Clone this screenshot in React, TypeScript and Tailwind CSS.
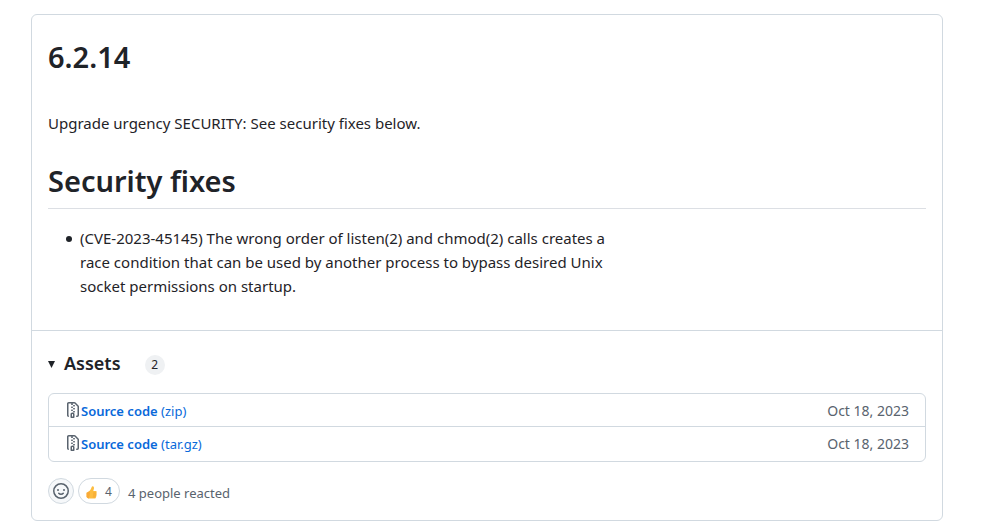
const assets = [
  { name: "Source code", ext: "(zip)", date: "Oct 18, 2023" },
  { name: "Source code", ext: "(tar.gz)", date: "Oct 18, 2023" },
];

function FileZipIcon() {
  return (
    <svg width="16" height="16" viewBox="0 0 16 16" fill="#59636e" aria-hidden="true" className="mb-0.5 shrink-0">
      <path d="M3.5 1.75v11.5c0 .09.048.173.126.217a.75.75 0 0 1-.752 1.298A1.748 1.748 0 0 1 2 13.25V1.75C2 .784 2.784 0 3.75 0h5.586c.464 0 .909.185 1.237.513l2.914 2.914c.329.328.513.773.513 1.237v8.586A1.75 1.75 0 0 1 12.25 15h-.5a.75.75 0 0 1 0-1.5h.5a.25.25 0 0 0 .25-.25V4.664a.25.25 0 0 0-.073-.177L9.513 1.573a.25.25 0 0 0-.177-.073H7.25a.75.75 0 0 1 0 1.5h-.5a.75.75 0 0 1 0-1.5h-3a.25.25 0 0 0-.25.25Zm3.75 8.75h.5c.966 0 1.75.784 1.75 1.75v3a.75.75 0 0 1-.75.75h-2.5a.75.75 0 0 1-.75-.75v-3c0-.966.784-1.75 1.75-1.75ZM6 5.25a.75.75 0 0 1 .75-.75h.5a.75.75 0 0 1 0 1.5h-.5A.75.75 0 0 1 6 5.25Zm.75 2.25h.5a.75.75 0 0 1 0 1.5h-.5a.75.75 0 0 1 0-1.5Zm1.25-.75A.75.75 0 0 1 8.75 6h.5a.75.75 0 0 1 0 1.5h-.5A.75.75 0 0 1 8 6.75ZM8.75 3h.5a.75.75 0 0 1 0 1.5h-.5a.75.75 0 0 1 0-1.5ZM8 9.75A.75.75 0 0 1 8.75 9h.5a.75.75 0 0 1 0 1.5h-.5A.75.75 0 0 1 8 9.75Zm-1 2.5v2.25h1v-2.25a.25.25 0 0 0-.25-.25h-.5a.25.25 0 0 0-.25.25Z" />
    </svg>
  );
}

function SmileyIcon() {
  return (
    <svg width="16" height="16" viewBox="0 0 16 16" fill="none" stroke="#59636e" strokeWidth="1.5" strokeLinecap="round" aria-hidden="true">
      <circle cx="8" cy="8" r="7.25" />
      <path d="M5.75 10.25C6.3 10.95 7.1 11.25 8 11.25s1.7-.3 2.25-1" />
      <circle cx="5" cy="7" r="1" fill="#59636e" stroke="none" />
      <circle cx="11" cy="7" r="1" fill="#59636e" stroke="none" />
    </svg>
  );
}

function ThumbIcon() {
  return (
    <svg width="11" height="13" viewBox="0 0 11 13" aria-hidden="true">
      <path d="M.6 6.8C2.4 6.2 3.9 4.8 4.9 3L5.7.9C6.2-.3 8.2.2 8 2.2L7.3 5h2.2c1.4 0 1.6 1.7.7 2 .9.4.8 1.7 0 2 .6.5.4 1.6-.4 1.8.3.9-.2 1.8-1.2 1.8H4C2.4 12.6 1.2 12 .6 11Z" fill="#fdbd40" />
      <path d="M.6 6.8C1.7 6.4 2.6 5.8 3.4 5L4 7.6 3 12.4C2 12.2 1.1 11.8.6 11Z" fill="#f9a936" />
      <path d="M7.2 7.1H10M7 9H10M6.9 10.9H9.6" stroke="#ee9827" strokeWidth=".6" />
    </svg>
  );
}

export default function App() {
  return (
    <main className="bg-white pt-[14px] pr-[62px] pb-[11px] pl-[31px] font-['Noto_Sans','Open_Sans',sans-serif] text-[#1f2328]">
      <article className="rounded-md border border-[#d1d9e0]">
        <div className="px-4 pt-[18px] pb-8">
          <h2 className="text-[29px] leading-12 font-semibold">6.2.14</h2>
          <p className="mt-[30px] text-[15px] leading-6">Upgrade urgency SECURITY: See security fixes below.</p>
          <h1 className="mt-[26px] border-b border-[#dcdfe4] pb-[7px] text-[29px] leading-10 font-semibold">Security fixes</h1>
          <ul className="mt-[17px] max-w-[580px] pl-[18px] text-[15px] leading-6">
            <li className="flex gap-2 before:mt-[10px] before:size-1.5 before:shrink-0 before:rounded-full before:bg-[#1f2328]">
              (CVE-2023-45145) The wrong order of listen(2) and chmod(2) calls creates a race condition that can be used by
              another process to bypass desired Unix socket permissions on startup.
            </li>
          </ul>
        </div>
        <div className="border-t border-[#d1d9e0] px-4 pt-[18px] pb-4">
          <details open>
            <summary className="flex h-7 cursor-pointer items-center">
              <svg width="7" height="7" viewBox="0 0 7 7" aria-hidden="true" className="mt-0.5">
                <path d="M0 0h7L3.5 7Z" fill="#1f2328" />
              </svg>
              <span className="ml-[9px] text-lg leading-7 font-semibold">Assets</span>
              <span className="mt-1 ml-6 flex size-5 items-center justify-center rounded-full bg-[#eff1f3] text-xs">2</span>
            </summary>
            <ul className="mt-4 divide-y divide-[#d1d9e0] rounded-md border border-[#d1d9e0] text-[13px] leading-5">
              {assets.map((asset) => (
                <li key={asset.ext} className="flex items-center justify-between px-4 pt-[7px] pb-[5px] last:pb-[7px]">
                  <a href="#" className="flex items-center text-[#0969da]">
                    <FileZipIcon />
                    <span>
                      <span className="font-semibold">{asset.name}</span> {asset.ext}
                    </span>
                  </a>
                  <time dateTime="2023-10-18" className="text-sm leading-5 text-[#59636e]">{asset.date}</time>
                </li>
              ))}
            </ul>
          </details>
          <div className="mt-4 flex items-center text-[#59636e]">
            <button type="button" aria-label="Add reaction" className="flex size-[26px] items-center justify-center rounded-full border border-[#d1d9e0] bg-[#f6f8fa]">
              <SmileyIcon />
            </button>
            <button type="button" aria-label="4 people reacted with thumbs up" className="ml-1 flex h-[26px] w-[42px] items-center justify-center gap-2 rounded-full border border-[#d1d9e0] pt-0.5 text-xs">
              <ThumbIcon />
              <span>4</span>
            </button>
            <span className="ml-2 pt-1 text-[13px] leading-5">4 people reacted</span>
          </div>
        </div>
      </article>
    </main>
  );
}
